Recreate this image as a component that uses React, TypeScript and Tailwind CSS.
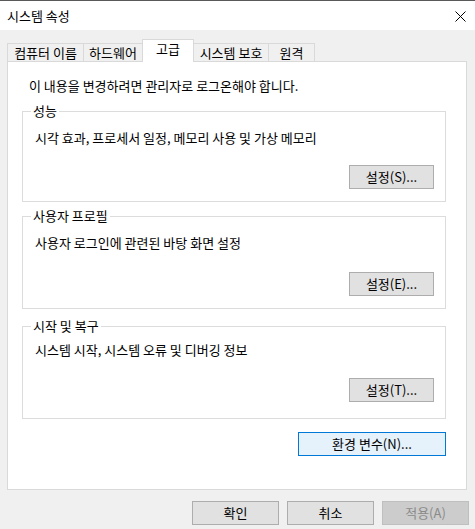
import React from "react";

const font = { fontFamily: '"Noto Sans CJK KR", "Noto Sans", sans-serif' };

function WinButton({ label, className = "" }: { label: string; className?: string }) {
  return (
    <button
      className={
        "h-[24px] flex items-center justify-center border border-[#adadad] bg-[#e1e1e1] text-[13px] leading-[16px] text-black " +
        className
      }
    >
      {label}
    </button>
  );
}

function Group({
  title,
  text,
  button,
  textGap,
  buttonGap,
  className = "",
}: {
  title: string;
  text: string;
  button: string;
  textGap: string;
  buttonGap: string;
  className?: string;
}) {
  return (
    <div className={"w-[424px] flex flex-col border border-[#dcdcdc] " + className}>
      <span className="-mt-[9px] ml-[8px] self-start bg-white px-[2px] text-[13px] leading-[16px]">{title}</span>
      <div className={"pl-[12px] text-[13px] leading-[16px] " + textGap}>{text}</div>
      <div className={"flex justify-end pr-[11px] " + buttonGap}>
        <WinButton label={button} className="w-[85px]" />
      </div>
    </div>
  );
}

export default function App() {
  const tabs =
    "h-[18px] flex items-center justify-center border-t border-r border-[#d9d9d9] bg-[#f0f0f0] text-[13px] leading-[16px]";
  return (
    <div className="w-[475px] h-[529px] bg-[#f0f0f0] text-black overflow-hidden" style={font}>
      {/* title bar */}
      <div className="h-[30px] bg-white border-t border-[#595959] flex items-center justify-between pl-[7px] pr-[9px]">
        <span className="text-[13px] leading-[16px]">시스템 속성</span>
        <svg width="11" height="11" viewBox="0 0 11 11" className="mt-[1px]">
          <path d="M0.5 0.5 L10.5 10.5 M10.5 0.5 L0.5 10.5" stroke="#000" strokeWidth="1" />
        </svg>
      </div>

      {/* tabs */}
      <div className="mt-[9px] h-[22px] flex items-end pl-[7px]">
        <div className={tabs + " w-[77px] border-l"}>컴퓨터 이름</div>
        <div className={tabs + " w-[58px] border-r-0"}>하드웨어</div>
        <div className="relative z-10 -mb-px h-[23px] w-[52px] flex items-start justify-center pt-[1px] border border-b-0 border-[#d9d9d9] bg-white text-[13px] leading-[16px]">
          고급
        </div>
        <div className={tabs + " w-[75px]"}>시스템 보호</div>
        <div className={tabs + " w-[46px]"}>원격</div>
      </div>

      {/* panel */}
      <div className="ml-[7px] w-[460px] h-[429px] flex flex-col border border-[#d9d9d9] bg-white px-[14px] pt-[16px]">
        <div className="pl-[7px] text-[13px] leading-[16px]">이 내용을 변경하려면 관리자로 로그온해야 합니다.</div>

        <Group
          className="mt-[17px] h-[91px]"
          title="성능"
          text="시각 효과, 프로세서 일정, 메모리 사용 및 가상 메모리"
          button="설정(S)..."
          textGap="mt-[11px]"
          buttonGap="mt-[19px]"
        />
        <Group
          className="mt-[14px] h-[93px]"
          title="사용자 프로필"
          text="사용자 로그인에 관련된 바탕 화면 설정"
          button="설정(E)..."
          textGap="mt-[11px]"
          buttonGap="mt-[21px]"
        />
        <Group
          className="mt-[17px] h-[93px]"
          title="시작 및 복구"
          text="시스템 시작, 시스템 오류 및 디버깅 정보"
          button="설정(T)..."
          textGap="mt-[8px]"
          buttonGap="mt-[20px]"
        />

        <div className="w-[424px] flex justify-end mt-[13px]">
          <button className="h-[24px] w-[148px] border border-[#0078d7] bg-[#e5f1fb] text-[13px] leading-[16px]">
            환경 변수(N)...
          </button>
        </div>
      </div>

      {/* footer buttons */}
      <div className="mt-[11px] flex justify-end gap-[8px] pr-[6px]">
        <WinButton label="확인" className="w-[87px]" />
        <WinButton label="취소" className="w-[87px]" />
        <button className="h-[24px] w-[87px] border border-[#bfbfbf] bg-[#cccccc] text-[13px] leading-[16px] text-[#8a8a8a]">
          적용(A)
        </button>
      </div>
    </div>
  );
}
